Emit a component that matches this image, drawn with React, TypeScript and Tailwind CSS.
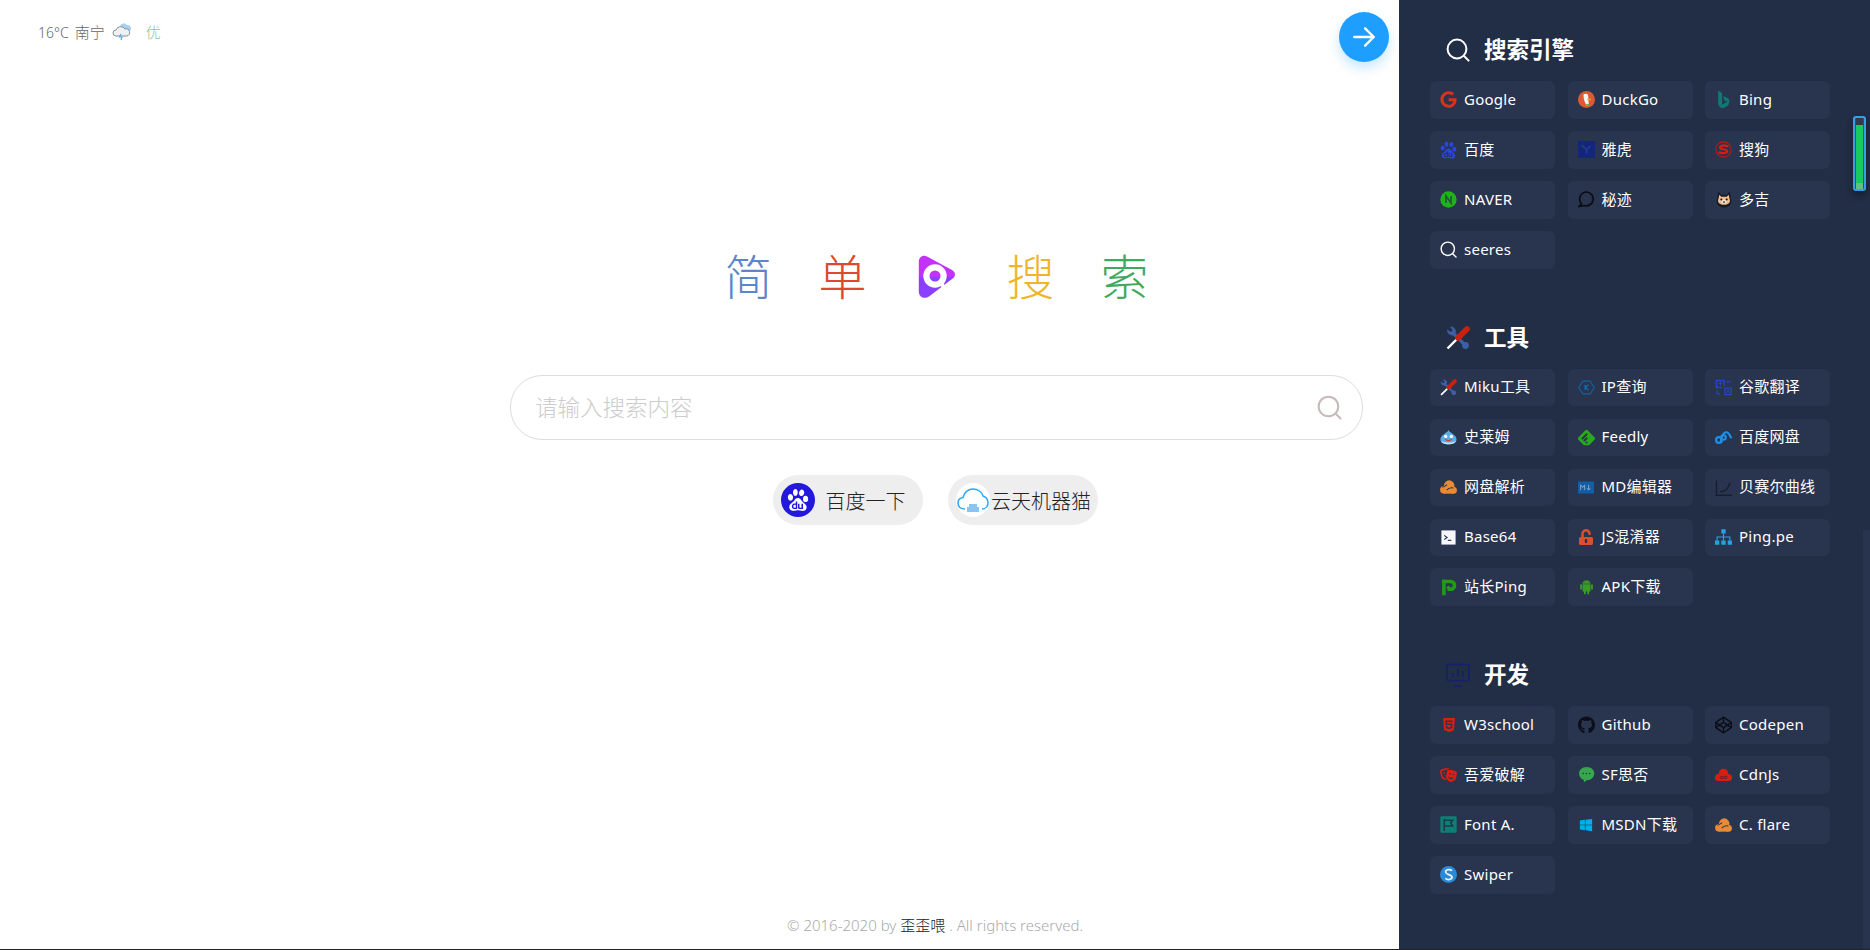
import React from "react";
import {
  FaCodepen,
  FaGithub,
  FaGoogle,
  FaHtml5,
  FaTheaterMasks,
  FaUnlockAlt,
  FaWindows,
} from "react-icons/fa";
import { AiFillAndroid } from "react-icons/ai";
import { SiBaidu, SiFeedly } from "react-icons/si";
import { BsBing } from "react-icons/bs";

const FONT = "font-['Noto_Sans','Noto_Sans_CJK_SC',sans-serif]";

function Magnifier({ className }: { className?: string }) {
  return (
    <svg viewBox="0 0 24 24" fill="none" stroke="currentColor" strokeWidth="2" strokeLinecap="round" className={className}>
      <circle cx="11" cy="11" r="9.4" />
      <path d="M18 18l4.6 4.6" />
    </svg>
  );
}

function Tools({ className }: { className?: string }) {
  return (
    <svg viewBox="0 0 24 24" fill="none" className={className}>
      <path d="M6 6l13 13" stroke="#3f5ea8" strokeWidth="3.2" />
      <path d="M1 3.5a5.5 5.5 0 0 0 7.500 5.500L10 5A5.500 5.500 0 0 0 4 .6L6.500 4 5 6z" fill="#3f5ea8" />
      <circle cx="19.500" cy="19.500" r="3.400" fill="#3f5ea8" />
      <path d="M1.500 22.500l9-9" stroke="#fff" strokeWidth="2.400" />
      <path d="M12 12l9-9" stroke="#c9200f" strokeWidth="5.600" strokeLinecap="round" />
    </svg>
  );
}

function OrangeCloud({ className }: { className?: string }) {
  return (
    <svg viewBox="0 0 24 20" className={className}>
      <circle cx="13" cy="8" r="7.500" fill="#e98a35" />
      <circle cx="5.500" cy="14" r="5.500" fill="#e98a35" />
      <circle cx="19" cy="14.500" r="5" fill="#e98a35" />
      <rect x="5.500" y="10" width="13.500" height="9.500" fill="#e98a35" />
      <path d="M3 10.500C6 10 8 8 10 6.500M9.500 14.500C12 11.500 15 10.500 19 11.500" fill="none" stroke="#29344f" strokeWidth="1.500" />
    </svg>
  );
}

function DuckIcon({ className }: { className?: string }) {
  return (
    <svg viewBox="0 0 24 24" className={className}>
      <circle cx="12" cy="12" r="12" fill="#de5833" />
      <path d="M8 5c2-2 5-1.500 6 .5 1 2 .5 4 .5 6 0 3 1 6 1 8l-3 2c-2-4-4.500-9-4.500-12.500C8 7.500 7.500 6 8 5z" fill="#f6f2ee" />
      <path d="M13 11h5v2h-5z" fill="#e0b52c" />
      <path d="M11 19l5-1.500V20l-4 1z" fill="#4cba3c" />
    </svg>
  );
}

function SogouIcon({ className }: { className?: string }) {
  return (
    <svg viewBox="0 0 24 24" fill="none" className={className}>
      <circle cx="12" cy="12" r="10.800" stroke="#c4170c" strokeWidth="1.500" />
      <path d="M19 8C15 5.800 6.500 6 7 9.500c.4 2.800 10.400 1.400 10.200 5-.2 3.200-8.200 3.200-12.200 1.300" stroke="#d81e0f" strokeWidth="3" />
    </svg>
  );
}

function YahooIcon({ className }: { className?: string }) {
  return (
    <svg viewBox="0 0 24 24" className={className}>
      <rect width="24" height="24" fill="#14257c" />
      <path d="M5 6l7 6 6-5M12 12v6" fill="none" stroke="#273a8e" strokeWidth="2.400" />
    </svg>
  );
}

function NaverIcon({ className }: { className?: string }) {
  return (
    <svg viewBox="0 0 24 24" className={className}>
      <circle cx="12" cy="12" r="11.500" fill="#20b317" />
      <path d="M8.400 17V7l7.200 10V7" fill="none" stroke="#1c5c36" strokeWidth="2.400" />
    </svg>
  );
}

function MijiIcon({ className }: { className?: string }) {
  return (
    <svg viewBox="0 0 24 24" fill="none" className={className}>
      <path d="M12.500 1.500A9.800 9.800 0 0 0 5 18l-4 4 7.500-1.500a9.800 9.800 0 1 0 4-19z" stroke="#0a0c12" strokeWidth="2.200" />
      <path d="M17 5v1M19.500 8v1M20 11v1M19 14v1M17 17v1M14 19v1" stroke="#0a0c12" strokeWidth="1.600" />
    </svg>
  );
}

function DogeIcon({ className }: { className?: string }) {
  return (
    <svg viewBox="0 0 24 24" className={className}>
      <path d="M3.500 0l4 5h9l4-5L23 15c0 5-5 9-11 9S1 20 1 15z" fill="#171b28" />
      <path d="M5 5l3 3h8l3-3 2 9c0 3-3 6-9 6s-9-3-9-6z" fill="#f0bd88" />
      <path d="M7 12h10l-2 6H9z" fill="#f7e3cb" />
      <circle cx="8" cy="12" r="1.600" fill="#171b28" />
      <circle cx="16" cy="12" r="1.600" fill="#171b28" />
      <path d="M10 15h4l-2 2.500z" fill="#171b28" />
    </svg>
  );
}

function IpIcon({ className }: { className?: string }) {
  return (
    <svg viewBox="0 0 24 24" fill="none" className={className}>
      <path d="M7 3h10l6 9-6 9H7l-6-9z" stroke="#15619f" strokeWidth="1.600" />
      <path d="M10 8v8M10 12l5-4M11 12l4 4" stroke="#1a6cb0" strokeWidth="1.700" />
    </svg>
  );
}

function TranslateIcon({ className }: { className?: string }) {
  return (
    <svg viewBox="0 0 24 24" fill="none" className={className}>
      <path d="M10 12H2V2h11v8" stroke="#2745c9" strokeWidth="2" />
      <path d="M4.500 6h6M7.500 4v5" stroke="#2745c9" strokeWidth="1.500" />
      <path d="M16 4h6M3 16v5h4" stroke="#2745c9" strokeWidth="1.600" />
      <path d="M14 13h9v9h-9z" stroke="#2745c9" strokeWidth="1.800" />
      <path d="M16.500 20l2-5 2 5" stroke="#2745c9" strokeWidth="1.300" />
    </svg>
  );
}

function SlimeIcon({ className }: { className?: string }) {
  return (
    <svg viewBox="0 0 24 21" className={className}>
      <path d="M12 0c1 3 5 4 9 8 4 4 4 12-9 12S-1 12 3 8c4-4 8-5 9-8z" fill="#5aaee6" />
      <path d="M1.500 15.500c4 3 17 3 21 0-1.500 6-19.500 6-21 0z" fill="#cfe6f6" />
      <circle cx="8" cy="9" r="2.300" fill="#fff" />
      <circle cx="16" cy="9" r="2.300" fill="#fff" />
      <path d="M6.500 12c3 2.500 8 2.500 11 0-1 5-10 5-11 0z" fill="#c93a2a" />
    </svg>
  );
}

function PanIcon({ className }: { className?: string }) {
  return (
    <svg viewBox="0 3 24 18" fill="none" stroke="#1e8fe8" strokeWidth="3" className={className}>
      <circle cx="5.500" cy="15.500" r="4" />
      <path d="M9 18.500c-2-2 2-14 7-14 3 0 5 4 6.500 7.500" strokeLinecap="round" />
      <circle cx="12" cy="12" r="3.200" />
    </svg>
  );
}

function MdIcon({ className }: { className?: string }) {
  return (
    <svg viewBox="0 0 24 18" className={className}>
      <rect width="24" height="18" fill="#0f5fa8" />
      <path d="M4 13V5l3 4 3-4v8M16 5v7M13.500 10l2.500 3 2.500-3" fill="none" stroke="#8aa4c4" strokeWidth="1.500" />
    </svg>
  );
}

function BezierIcon({ className }: { className?: string }) {
  return (
    <svg viewBox="0 0 24 24" fill="none" stroke="#181f33" strokeWidth="2" className={className}>
      <path d="M2 2v21h22" />
      <path d="M7 18c8 0 12-4 14-13" />
    </svg>
  );
}

function Base64Icon({ className }: { className?: string }) {
  return (
    <svg viewBox="0 0 24 24" className={className}>
      <rect x="2" y="2" width="20" height="20" fill="#f6f7fa" />
      <path d="M6 9l4 3-4 3" fill="none" stroke="#232c44" strokeWidth="1.600" />
      <path d="M11 16h5" stroke="#232c44" strokeWidth="1.600" />
    </svg>
  );
}

function SitemapIcon({ className }: { className?: string }) {
  return (
    <svg viewBox="0 0 24 24" className={className}>
      <path fill="#1fa5e6" d="M9 1h6v6H9zM0 17h6v6H0zM9 17h6v6H9zM18 17h6v6h-6z" />
      <path fill="none" stroke="#1fa5e6" strokeWidth="1.600" d="M12 7v10M3 17v-5h18v5" />
    </svg>
  );
}

function PingIcon({ className }: { className?: string }) {
  return (
    <svg viewBox="0 0 24 24" className={className}>
      <path d="M3 1h5v22H3z" fill="#1f9d16" />
      <path d="M3 1h12a8 8 0 0 1 0 16h-3v-5h3a3 3 0 0 0 0-6H3z" fill="#1f9d16" />
      <path d="M12 9l4 4h-2.500v4h-3v-4H8z" fill="#1f9d16" />
    </svg>
  );
}

function MonitorIcon({ className }: { className?: string }) {
  return (
    <svg viewBox="0 0 24 24" fill="none" stroke="#15206e" strokeWidth="1.600" className={className}>
      <rect x="1" y="1.500" width="22" height="16" rx="1.500" />
      <path d="M8 23h8M7 14v-4M12 14V6M17 14v-6" />
    </svg>
  );
}

function SfIcon({ className }: { className?: string }) {
  return (
    <svg viewBox="0 0 24 24" className={className}>
      <path d="M12 1.500C5.500 1.500 1.500 6 1.500 10.500c0 4.500 3.500 8 6.500 9l.5 3.500 4-3c6 0 10.500-4.500 10.500-9.500S18.500 1.500 12 1.500z" fill="#37a64f" />
      <circle cx="7.500" cy="10.500" r="1.100" fill="#1b3a3a" />
      <circle cx="12" cy="10.500" r="1.100" fill="#1b3a3a" />
      <circle cx="16.500" cy="10.500" r="1.100" fill="#1b3a3a" />
    </svg>
  );
}

function CdnIcon({ className }: { className?: string }) {
  return (
    <svg viewBox="0 0 24 18" className={className}>
      <circle cx="12" cy="6.500" r="6.500" fill="#d81e0f" />
      <circle cx="5" cy="12.500" r="5" fill="#d81e0f" />
      <circle cx="19" cy="12.500" r="5" fill="#d81e0f" />
      <rect x="5" y="8" width="14" height="9.500" fill="#d81e0f" />
      <path d="M7 12.500c2-2.500 3.500-1.500 5 0s3 2.500 5 0c0-2.500-3-2.500-5 0s-4.500 2.500-5 0z" fill="none" stroke="#3a2440" strokeWidth="1.200" />
    </svg>
  );
}

function FontAIcon({ className }: { className?: string }) {
  return (
    <svg viewBox="0 0 24 24" className={className}>
      <rect x=".5" y=".5" width="23" height="23" rx="1.500" fill="#0e7f74" />
      <path d="M6 4v17M6 6h12l-3 4 3 4H6" fill="none" stroke="#1e3a48" strokeWidth="2.200" />
    </svg>
  );
}

function SwiperIcon({ className }: { className?: string }) {
  return (
    <svg viewBox="0 0 24 24" className={className}>
      <circle cx="12" cy="12" r="12" fill="#2a8ad6" />
      <path d="M17 6.500C13 3.500 7 5.500 8 9c1 3.500 9 3 9 7 0 3-6 4.500-9.500 1.500" fill="none" stroke="#e8f2fa" strokeWidth="2.400" />
    </svg>
  );
}

function BaiduCircle() {
  return (
    <span className="flex h-[34px] w-[34px] shrink-0 items-center justify-center rounded-full bg-[#2319dc]">
      <SiBaidu className="h-[22px] w-[22px] text-white" />
    </span>
  );
}

function RobotCloud() {
  return (
    <span className="flex h-[34px] w-[34px] shrink-0 items-center justify-center rounded-full bg-white">
      <svg viewBox="0 0 34 34" fill="none" className="h-[34px] w-[34px]">
        <path d="M9 26c-5 0-7-3-7-6s2-5 5-5.500C8 9 13 6 17 6c5 0 9 3 10 7 3 1 5 3.500 5 7 0 3-2 6-6 6" stroke="#2aa8f5" strokeWidth="1.500" />
        <path d="M13 21h8v3h2v5H11v-5h2z" fill="#8cc4f0" />
      </svg>
    </span>
  );
}

function WeatherIcon() {
  return (
    <svg viewBox="0 0 20 20" className="h-[20px] w-[20px]">
      <path d="M8 4a4 4 0 0 1 7-1 3.500 3.500 0 0 1 3 6z" fill="#a8d0f4" />
      <path d="M4 14a3 3 0 0 1 0-6 5 5 0 0 1 9-1 3.500 3.500 0 0 1 2 7z" fill="#eef0f2" stroke="#8a8f96" strokeWidth="1" />
      <path d="M9 12l-1.500 3H10l-1 3" fill="none" stroke="#5aa7ea" strokeWidth="1.200" />
    </svg>
  );
}

const LOGO_SHAPE = "M.8 7C.8 2 5-.6 9 1.500L34 15c4 2.500 4 6.500 0 9L11 41.500c-4 2.800-10.200 1-10.200-5z";

function LogoIcon() {
  return (
    <svg viewBox="0 0 38 44" className="h-[44px] w-[38px]">
      <defs>
        <clipPath id="logo-top">
          <rect x="0" y="0" width="38" height="22" />
        </clipPath>
        <clipPath id="logo-bottom">
          <rect x="0" y="22" width="38" height="22" />
        </clipPath>
      </defs>
      <path d={LOGO_SHAPE} fill="#c332fb" clipPath="url(#logo-top)" />
      <path d={LOGO_SHAPE} fill="#8c40ff" clipPath="url(#logo-bottom)" />
      <circle cx="17" cy="21" r="8.600" fill="none" stroke="#fff" strokeWidth="6.200" />
      <path d="M21 26l9 11" fill="none" stroke="#fff" strokeWidth="3.600" />
    </svg>
  );
}

const ic = "h-[17px] w-[17px]";

const engines = [
  { name: "Google", icon: <FaGoogle className={`${ic} text-[#d8321f]`} /> },
  { name: "DuckGo", icon: <DuckIcon className={ic} /> },
  { name: "Bing", icon: <BsBing className={`${ic} text-[#0f7a73]`} /> },
  { name: "百度", icon: <SiBaidu className={`h-[18px] w-[18px] text-[#2a46e0]`} /> },
  { name: "雅虎", icon: <YahooIcon className={ic} /> },
  { name: "搜狗", icon: <SogouIcon className={ic} /> },
  { name: "NAVER", icon: <NaverIcon className={ic} /> },
  { name: "秘迹", icon: <MijiIcon className={ic} /> },
  { name: "多吉", icon: <DogeIcon className="h-[17px] w-[16px]" /> },
  { name: "seeres", icon: <Magnifier className={`${ic} text-white`} /> },
];

const tools = [
  { name: "Miku工具", icon: <Tools className={ic} /> },
  { name: "IP查询", icon: <IpIcon className={ic} /> },
  { name: "谷歌翻译", icon: <TranslateIcon className={ic} /> },
  { name: "史莱姆", icon: <SlimeIcon className="h-[15px] w-[17px]" /> },
  { name: "Feedly", icon: <SiFeedly className="h-[19px] w-[19px] text-[#2aa81f]" /> },
  { name: "百度网盘", icon: <PanIcon className="h-[13px] w-[17px]" /> },
  { name: "网盘解析", icon: <OrangeCloud className="h-[14px] w-[17px]" /> },
  { name: "MD编辑器", icon: <MdIcon className="h-[13px] w-[16px]" /> },
  { name: "贝赛尔曲线", icon: <BezierIcon className={ic} /> },
  { name: "Base64", icon: <Base64Icon className={ic} /> },
  { name: "JS混淆器", icon: <FaUnlockAlt className="h-[16px] w-[14px] text-[#d9502e]" /> },
  { name: "Ping.pe", icon: <SitemapIcon className="h-[18px] w-[18px]" /> },
  { name: "站长Ping", icon: <PingIcon className={ic} /> },
  { name: "APK下载", icon: <AiFillAndroid className="h-[18px] w-[18px] text-[#3a9d23]" /> },
];

const dev = [
  { name: "W3school", icon: <FaHtml5 className="h-[16px] w-[16px] text-[#d8200f]" /> },
  { name: "Github", icon: <FaGithub className="h-[18px] w-[18px] text-[#0c0f18]" /> },
  { name: "Codepen", icon: <FaCodepen className="h-[18px] w-[18px] text-[#0c0f18]" /> },
  { name: "吾爱破解", icon: <FaTheaterMasks className="h-[16px] w-[19px] text-[#d8200f]" /> },
  { name: "SF思否", icon: <SfIcon className={ic} /> },
  { name: "CdnJs", icon: <CdnIcon className="h-[14px] w-[18px]" /> },
  { name: "Font A.", icon: <FontAIcon className={ic} /> },
  { name: "MSDN下载", icon: <FaWindows className="h-[14px] w-[14px] text-[#00adef]" /> },
  { name: "C. flare", icon: <OrangeCloud className="h-[14px] w-[17px]" /> },
  { name: "Swiper", icon: <SwiperIcon className={ic} /> },
];

const headingIcon = "h-[24px] w-[24px]";

const sections = [
  { title: "搜索引擎", icon: <Magnifier className={`${headingIcon} text-white`} />, items: engines },
  { title: "工具", icon: <Tools className={headingIcon} />, items: tools },
  { title: "开发", icon: <MonitorIcon className={headingIcon} />, items: dev },
];

const titleChars = [
  { c: "简", color: "text-[#5b86c9]" },
  { c: "单", color: "text-[#dc4a2b]" },
  { c: null, color: "" },
  { c: "搜", color: "text-[#efb52a]" },
  { c: "索", color: "text-[#3daa5e]" },
];

function Sidebar() {
  return (
    <aside className="relative h-full w-[471px] shrink-0 overflow-hidden bg-[#222d46] pl-[31px] pt-[29px]">
      <div className="flex flex-col gap-[48px]">
        {sections.map((section) => (
          <section key={section.title}>
            <h2 className="mb-[12px] flex h-[40px] items-center gap-[14px] pl-[16px] text-[22.5px] font-bold text-white">
              <span className="mt-[2px] flex">{section.icon}</span>
              <span className="pt-[2px]">{section.title}</span>
            </h2>
            <div className="grid w-[400px] grid-cols-3 gap-x-[12.5px] gap-y-[12.4px]">
              {section.items.map((item) => (
                <div key={item.name} className="flex h-[37.6px] items-center gap-[7px] rounded-[6px] bg-[#29344f] pl-[10px] text-[15px] tracking-[0.25px] text-white">
                  <span className="flex h-[17px] w-[17px] shrink-0 items-center justify-center">{item.icon}</span>
                  <span className="pb-[2px]">{item.name}</span>
                </div>
              ))}
            </div>
          </section>
        ))}
      </div>
      {/* scrollbar thumb sits on top of the list */}
      <div className="absolute left-[454px] top-[116px] flex h-[75px] w-[13px] flex-col overflow-hidden rounded-[3px] border-2 border-[#35a0e8] bg-[#4436b8] px-px shadow-[0_4px_6px_#171d2e]">
        <div className="h-[7px] shrink-0 bg-[#333a46]" />
        <div className="flex-1 bg-[#1cc665]" />
        <div className="h-[6px] shrink-0 bg-[#63c080]" />
      </div>
      <div className="absolute bottom-0 right-0 top-[530px] w-[7px] bg-[#28334e]" />
    </aside>
  );
}

export default function App() {
  return (
    <div className={`flex h-[950px] w-full flex-col overflow-hidden bg-white ${FONT}`}>
      <div className="flex min-h-0 flex-1">
        <main className="relative flex h-full flex-1 flex-col">
          <div className="flex h-[64px] items-center pl-[38px] font-light text-[#666]">
            <span className="text-[14px]">16°C</span>
            <span className="ml-[6px] text-[15px]">南宁</span>
            <span className="ml-[7px] flex">
              <WeatherIcon />
            </span>
            <span className="ml-[14px] text-[15px] text-[#8ac79a]">优</span>
          </div>
          <button className="absolute left-[1339px] top-[12px] flex h-[50px] w-[50px] items-center justify-center rounded-full bg-[#1e9fff] shadow-[0_6px_12px_rgba(30,159,255,0.25)]">
            <svg viewBox="0 0 24 24" fill="none" stroke="white" strokeWidth="2.200" strokeLinecap="round" strokeLinejoin="round" className="h-[26px] w-[26px]">
              <path d="M3 12h18M13 4l8 8-8 8" />
            </svg>
          </button>

          <div className="ml-[510px] flex w-[853px] flex-col items-center">
            <div className="mt-[183px] flex h-[60px] items-center justify-center">
              {titleChars.map((t, i) => (
                <div key={i} className={`flex w-[94px] justify-center text-[48px] font-light leading-none ${t.color}`}>
                  {t.c ?? <LogoIcon />}
                </div>
              ))}
            </div>
            <div className="mt-[68px] flex h-[65px] w-full items-center justify-between rounded-[32px] border border-[#ddd] pl-[24px] pr-[20px]">
              <input
                placeholder="请输入搜索内容"
                className="w-[500px] bg-transparent text-[22.5px] font-light outline-none placeholder:text-[#ccc]"
              />
              <Magnifier className="h-[25px] w-[25px] text-[#c8baba]" />
            </div>
            <div className="mr-[2px] mt-[35px] flex gap-[25px]">
              <div className="flex h-[50px] w-[150px] items-center gap-[10.5px] rounded-full bg-[#eee] pl-[8px] text-[20px] font-light text-[#222]">
                <BaiduCircle />
                <span className="pt-[3px]">百度一下</span>
              </div>
              <div className="flex h-[50px] w-[150px] items-center gap-[1px] rounded-full bg-[#eee] pl-[8px] text-[20px] font-light text-[#222]">
                <RobotCloud />
                <span className="pt-[3px]">云天机器猫</span>
              </div>
            </div>
          </div>

          <footer className="mt-auto ml-[787px] pb-[13px] text-[15px] font-light text-[#aaa]">
            © 2016-2020 by <span className="text-[#222]">歪歪喂</span> . All rights reserved.
          </footer>
        </main>
        <Sidebar />
      </div>
      <div className="h-px shrink-0 bg-[#222]" />
    </div>
  );
}
